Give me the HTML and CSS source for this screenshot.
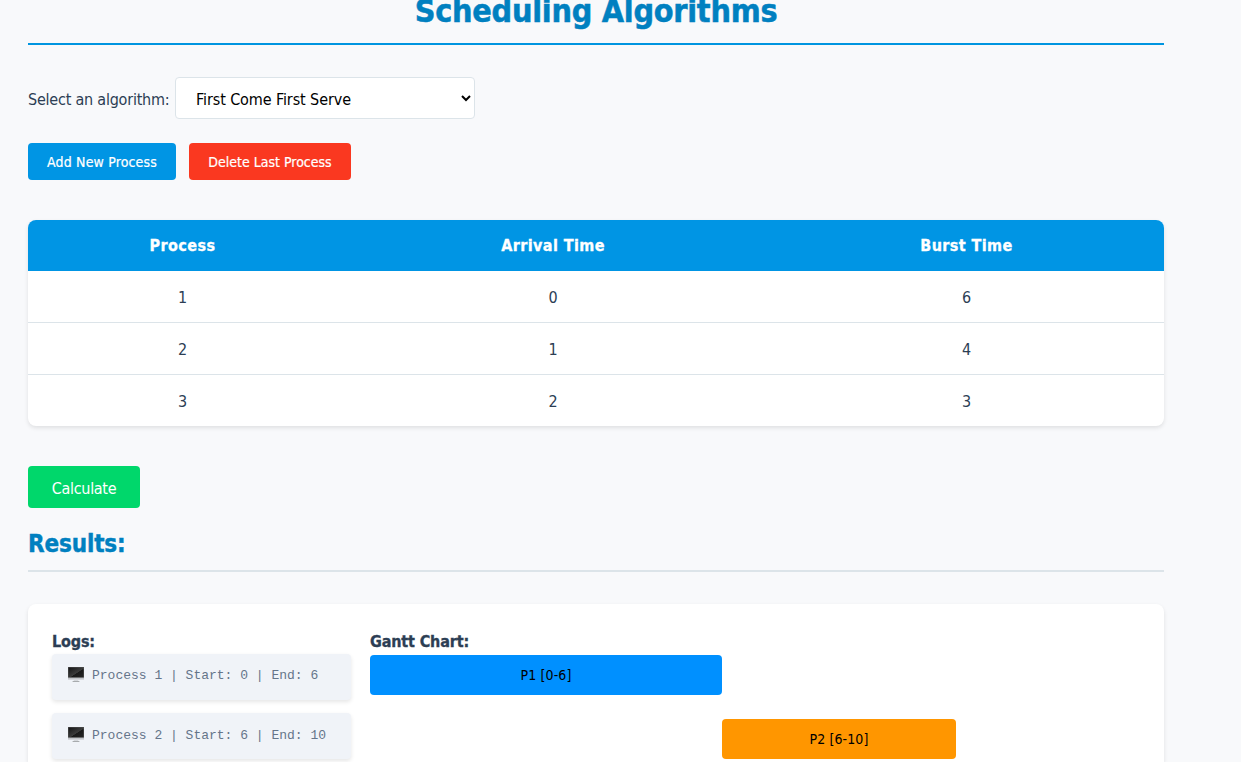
FILE: index.html
```html
<!DOCTYPE html>
<html lang="en">
<head>
<meta charset="utf-8">
<title>Scheduling Algorithms</title>
<link rel="stylesheet" href="styles.css">
</head>
<body>
<main class="page">
  <h1 class="title">Scheduling Algorithms</h1>
  <div class="picker">
    <label class="picker-label" for="algo">Select an algorithm:</label>
    <select class="picker-select" id="algo"><option>First Come First Serve</option></select>
  </div>
  <div class="actions">
    <button class="btn btn-add">Add New Process</button>
    <button class="btn btn-delete">Delete Last Process</button>
  </div>
  <table class="table">
    <colgroup><col class="col-process"><col class="col-arrival"><col class="col-burst"></colgroup>
    <thead><tr><th>Process</th><th>Arrival Time</th><th>Burst Time</th></tr></thead>
    <tbody>
      <tr><td>1</td><td>0</td><td>6</td></tr>
      <tr><td>2</td><td>1</td><td>4</td></tr>
      <tr><td>3</td><td>2</td><td>3</td></tr>
    </tbody>
  </table>
  <button class="btn btn-calc">Calculate</button>
  <h2 class="results-title">Results:</h2>
  <section class="results">
    <div class="logs">
      <h3 class="label">Logs:</h3>
      <div class="log"><svg class="monitor"><use href="#monitor"/></svg><span>Process 1 | Start: 0 | End: 6</span></div>
      <div class="log"><svg class="monitor"><use href="#monitor"/></svg><span>Process 2 | Start: 6 | End: 10</span></div>
    </div>
    <div class="gantt">
      <h3 class="label">Gantt Chart:</h3>
      <div class="bar bar-p1">P1 [0-6]</div>
      <div class="bar bar-p2">P2 [6-10]</div>
    </div>
  </section>
</main>
<svg class="defs" width="0" height="0">
  <defs>
    <linearGradient id="screen" x1="0" y1="0" x2="1" y2="1"><stop offset="0" stop-color="#141414"/><stop offset=".55" stop-color="#3c3c3c"/><stop offset=".58" stop-color="#1a1a1a"/><stop offset="1" stop-color="#262626"/></linearGradient>
    <symbol id="monitor" viewBox="0 0 16 16">
      <rect width="16" height="12.6" fill="#c3c6ca"/>
      <rect width="16" height="10.6" fill="#555"/>
      <rect x=".5" y=".5" width="15" height="9.7" fill="url(#screen)"/>
      <path d="M6 12.6h4l.4 1.6H5.6z" fill="#d5d8dc"/>
      <rect x="4.6" y="14" width="6.8" height="1" fill="#a8abae"/>
    </symbol>
  </defs>
</svg>
</body>
</html>
```

FILE: styles.css
```css
* { box-sizing: border-box; }
html, body { margin: 0; height: 762px; overflow: hidden; }
body {
  background: #f8f9fb;
  color: #2c3e54;
  font-family: "DejaVu Sans Condensed", "DejaVu Sans", sans-serif;
  font-stretch: condensed;
  font-size: 16px;
  line-height: 20px;
}
.page { width: 1136px; height: 762px; margin-left: 28px; }
.title { margin: 0; height: 45px; border-bottom: 2px solid #0095e0; color: #0080c0; font-size: 32px; line-height: 22px; letter-spacing: -0.25px; text-align: center; -webkit-text-stroke: 0.5px; }
.picker { display: flex; align-items: center; gap: 6px; margin-top: 32px; height: 42px; }
.picker-label { width: 141px; padding-top: 3px; letter-spacing: -0.22px; white-space: nowrap; }
.picker-select { width: 300px; height: 42px; padding: 9px 16px 7px; border: 1px solid #dce4e9; border-radius: 4px; background: #fff; color: #000; font: inherit; letter-spacing: -0.1px; }
.actions { display: flex; gap: 13px; margin-top: 24px; }
.btn { display: block; padding: 0; border: 0; border-radius: 4px; color: #fff; font: inherit; white-space: nowrap; }
.btn-add, .btn-delete { height: 37px; font-size: 14px; -webkit-text-stroke: 0.2px; }
.btn-add { width: 148px; background: #0095e4; letter-spacing: 0.15px; }
.btn-delete { width: 162px; background: #fa3820; }
.table { width: 1136px; margin-top: 40px; border-spacing: 0; table-layout: fixed; background: #fff; border-radius: 8px; overflow: hidden; box-shadow: 0 2px 4px rgba(0,0,0,.1); text-align: center; }
.col-process { width: 309px; }
.col-arrival { width: 432px; }
.table th { height: 51px; padding: 0; background: #0095e4; color: #fff; letter-spacing: 0.4px; -webkit-text-stroke: 0.3px; }
.table td { height: 52px; padding: 2px 0 0; border-bottom: 1px solid #dce4e9; }
.table tr:last-child td { height: 51px; border-bottom: 0; }
.btn-calc { width: 112px; height: 42px; margin-top: 40px; padding-top: 3px; background: #00d76b; letter-spacing: -0.3px; }
.results-title { margin: 20px 0 0; height: 44px; padding-top: 1px; border-bottom: 2px solid #dce4e9; color: #0080c0; font-size: 24px; line-height: 30px; letter-spacing: -0.15px; -webkit-text-stroke: 0.4px; }
.results { display: flex; gap: 19px; height: 158px; margin-top: 32px; padding: 27px 24px 0; background: #fff; border-radius: 8px 8px 0 0; box-shadow: 0 2px 4px rgba(0,0,0,.1); }
.logs { width: 299px; }
.gantt { width: 770px; }
.label { margin: 0; height: 22.9px; padding-top: 1px; font-size: 16px; line-height: 20px; letter-spacing: -0.15px; -webkit-text-stroke: 0.3px; }
.log { display: flex; gap: 8px; height: 46px; padding: 14.3px 16px 0; margin-bottom: 13.5px; border-radius: 4px; background: #f0f3f8; box-shadow: 0 2px 4px rgba(0,0,0,.1); color: #65758a; font: 13px/16px "Liberation Mono", monospace; }
.monitor { width: 16px; height: 16px; margin-top: -1px; }
.bar { display: flex; align-items: center; justify-content: center; height: 40px; margin-top: 1.1px; border-radius: 4px; color: #000; font-size: 14px; letter-spacing: 0.1px; }
.bar-p1 { width: 352px; background: #0090ff; }
.bar-p2 { width: 234px; margin: 24px 0 0 352px; background: #ff9600; }
.defs { display: block; }
```
